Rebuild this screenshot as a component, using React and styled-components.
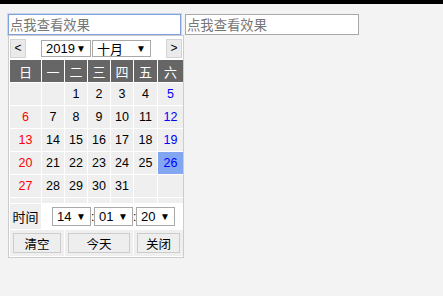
import styled, { createGlobalStyle } from 'styled-components'

const GlobalStyle = createGlobalStyle`
  html, body {
    margin: 0;
    padding: 0;
    background: #f3f3f3;
    font-family: "Liberation Sans", "Noto Sans CJK SC", sans-serif;
  }
`

const TopBar = styled.div`
  height: 4px;
  background: #000;
`

const Page = styled.div`
  padding: 10px 8px;
  display: flex;
  align-items: flex-start;
  gap: 4px;
`

const Field = styled.div`
  width: 173px;
  flex-shrink: 0;
  display: flex;
  flex-direction: column;
`

const DateInput = styled.input`
  box-sizing: border-box;
  width: ${p => p.$w}px;
  height: 21px;
  margin: 0;
  padding: 1px 1px;
  font-family: "Noto Sans CJK SC", sans-serif;
  font-size: 13.33px;
  background: #fff;
  border: 1px solid ${p => (p.$focus ? '#7ea0dc' : '#a9a9a9')};
  box-shadow: ${p => (p.$focus ? '0 0 0 1px rgba(126,160,220,0.35)' : 'none')};
  outline: none;
  &::placeholder { color: #777; }
`

const Calendar = styled.div`
  box-sizing: border-box;
  width: 176px;
  flex-shrink: 0;
  padding: 1px;
  background: #fff;
  border: 1px solid #ccc;
  font-size: 12.5px;
`

const Nav = styled.div`
  height: 22px;
  display: flex;
  align-items: center;
  justify-content: space-between;
  margin-bottom: 1px;
`

const NavButton = styled.div`
  box-sizing: border-box;
  width: 16px;
  height: 19px;
  border: 1px solid #d4d4d4;
  background: #eaeaea;
  font-family: "Liberation Sans", sans-serif;
  font-size: 12px;
  color: #000;
  display: flex;
  align-items: center;
  justify-content: center;
`

const Selects = styled.div`
  display: flex;
  gap: 1px;
`

const SelectBox = styled.div`
  box-sizing: border-box;
  width: ${p => p.$w}px;
  height: ${p => p.$h || 17}px;
  padding: 0 4px 0 4px;
  background: #fff;
  border: 1px solid #a9a9a9;
  display: flex;
  align-items: center;
  justify-content: space-between;
  font-family: "Liberation Sans", "Noto Sans CJK SC", sans-serif;
  font-size: 13px;
  color: #000;
  span:last-child { font-size: 10px; }
`

const Grid = styled.div`
  display: grid;
  grid-template-columns: 31px 22px 22px 22px 22px 23px 25px;
  grid-template-rows: 22px repeat(5, 22px) 5px 25px 26px;
  gap: 1px;
`

const WeekHead = styled.div`
  background: #666;
  color: #fff;
  font-family: "Noto Sans CJK SC", sans-serif;
  font-size: 13px;
  display: flex;
  align-items: center;
  justify-content: center;
`

const Day = styled.div`
  background: ${p => (p.$sel ? '#83a6f1' : '#efefef')};
  color: ${p => (p.$sel ? '#0000ff' : p.$col === 0 ? '#ff0000' : p.$col === 6 ? '#0000ff' : '#000')};
  display: flex;
  align-items: center;
  justify-content: center;
`

const TimeLabel = styled.div`
  background: #efefef;
  font-family: "Noto Sans CJK SC", sans-serif;
  font-size: 13px;
  display: flex;
  align-items: center;
  justify-content: center;
`

const TimeCell = styled.div`
  grid-column: span 6;
  display: flex;
  align-items: center;
  padding-left: 10px;
`

const Colon = styled.span`
  width: 3px;
  text-align: center;
  font-size: 12px;
`

const ButtonCell = styled.div`
  grid-column: span ${p => p.$span};
  background: #efefef;
  display: flex;
  align-items: center;
  justify-content: center;
`

const ActionButton = styled.div`
  box-sizing: border-box;
  width: calc(100% - 6px);
  height: 20px;
  background: #eee;
  border: 1px solid #ccc;
  font-family: "Noto Sans CJK SC", sans-serif;
  font-size: 12.5px;
  color: #000;
  display: flex;
  align-items: center;
  justify-content: center;
`

const weekdays = ['日', '一', '二', '三', '四', '五', '六']

const days = [
  null, null, 1, 2, 3, 4, 5,
  6, 7, 8, 9, 10, 11, 12,
  13, 14, 15, 16, 17, 18, 19,
  20, 21, 22, 23, 24, 25, 26,
  27, 28, 29, 30, 31, null, null,
  null, null, null, null, null, null, null,
]

const App = () => {
  return (
    <>
      <GlobalStyle />
      <TopBar />
      <Page>
        <Field>
          <DateInput $w={173} $focus placeholder="点我查看效果" />
          <Calendar>
            <Nav>
              <NavButton>&lt;</NavButton>
              <Selects>
                <SelectBox $w={50}><span>2019</span><span>▼</span></SelectBox>
                <SelectBox $w={59}><span>十月</span><span>▼</span></SelectBox>
              </Selects>
              <NavButton>&gt;</NavButton>
            </Nav>
            <Grid>
              {weekdays.map(w => <WeekHead key={w}>{w}</WeekHead>)}
              {days.map((d, i) => (
                <Day key={i} $col={i % 7} $sel={d === 26}>{d}</Day>
              ))}
              <TimeLabel>时间</TimeLabel>
              <TimeCell>
                <SelectBox $w={39} $h={19}><span>14</span><span>▼</span></SelectBox>
                <Colon>:</Colon>
                <SelectBox $w={39} $h={19}><span>01</span><span>▼</span></SelectBox>
                <Colon>:</Colon>
                <SelectBox $w={39} $h={19}><span>20</span><span>▼</span></SelectBox>
              </TimeCell>
              <ButtonCell $span={2}><ActionButton>清空</ActionButton></ButtonCell>
              <ButtonCell $span={3}><ActionButton>今天</ActionButton></ButtonCell>
              <ButtonCell $span={2}><ActionButton>关闭</ActionButton></ButtonCell>
            </Grid>
          </Calendar>
        </Field>
        <DateInput $w={174} placeholder="点我查看效果" />
      </Page>
    </>
  )
}

export default App
